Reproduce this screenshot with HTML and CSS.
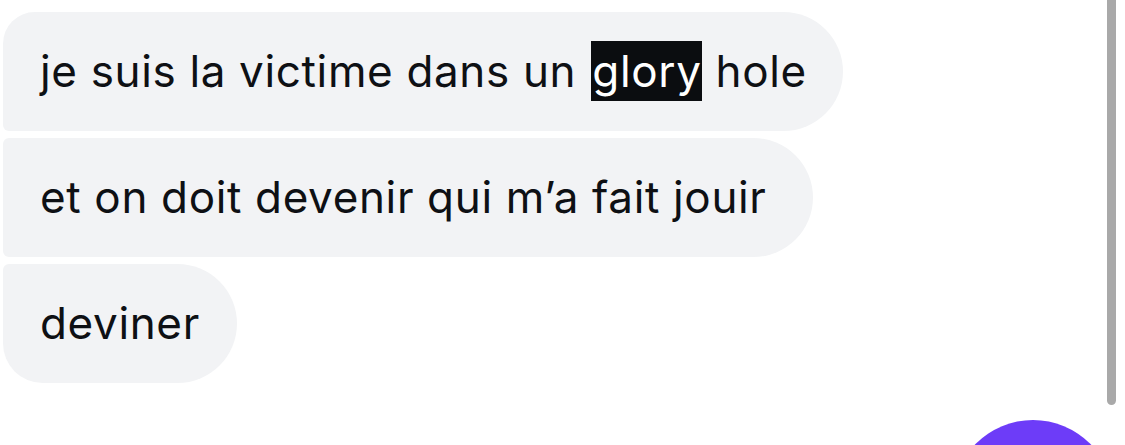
FILE: index.html
```html
<!DOCTYPE html>
<html lang="fr">
<head>
<meta charset="utf-8">
<link rel="stylesheet" href="styles.css">
</head>
<body>
<div class="chat">
  <div class="bubble first">je suis la victime dans un <span class="hl">glory</span> hole</div>
  <div class="bubble middle">et on doit devenir qui m’a fait jouir</div>
  <div class="bubble last">deviner</div>
</div>
<div class="scrollbar"></div>
<div class="fab-clip"><div class="fab"></div></div>
</body>
</html>
```
FILE: styles.css
```css
html, body {
  margin: 0;
  padding: 0;
  background: #ffffff;
  width: 1125px;
  height: 445px;
  overflow: hidden;
  position: relative;
}
.chat {
  display: flex;
  flex-direction: column;
  align-items: flex-start;
  gap: 7px;
  padding: 12px 0 0 3px;
  font-family: Inter, "Noto Sans", sans-serif;
  font-size: 44px;
  letter-spacing: 0.65px;
  color: #0e1014;
}
.bubble {
  background: #f2f3f5;
  padding: 29px 38px 29px 37px;
  line-height: 61px;
  height: 61px;
  white-space: nowrap;
  border-radius: 6px 60px 60px 6px;
}
.bubble.first { border-top-left-radius: 32px; padding-right: 36px; }
.bubble.middle { padding-right: 46px; }
.bubble.last { border-bottom-left-radius: 40px; padding-right: 37px; }
.hl {
  background: #0b0d10;
  color: #ffffff;
  display: inline-block;
  line-height: 60px;
  padding: 0 0 0 1px;
  margin-left: 2px;
  margin-right: 1px;
}
.scrollbar {
  position: absolute;
  left: 1107px;
  top: -10px;
  width: 9px;
  height: 415px;
  background: #a9a9a9;
  border-radius: 5px;
}
.fab-clip {
  position: absolute;
  left: 952px;
  top: 420px;
  width: 162px;
  height: 25px;
  overflow: hidden;
}
.fab {
  width: 162px;
  height: 162px;
  border-radius: 50%;
  background: #6d3cf8;
}
```
